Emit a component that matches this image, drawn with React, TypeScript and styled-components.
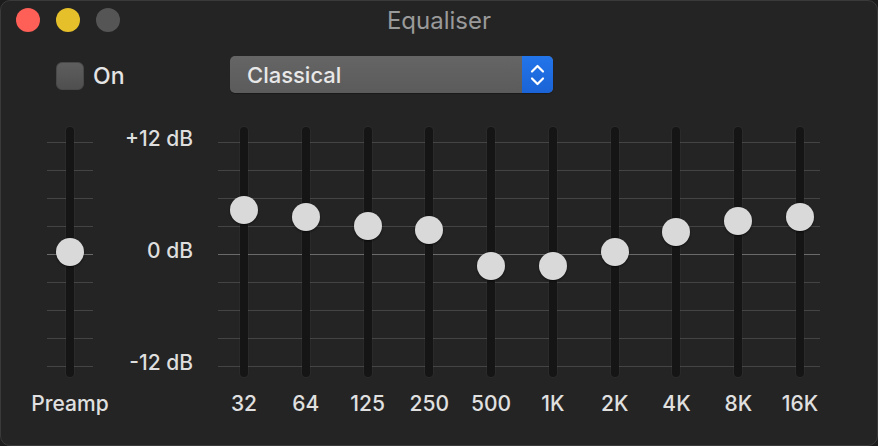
import React from 'react'
import styled, { createGlobalStyle, css } from 'styled-components'

const GlobalStyle = createGlobalStyle`
    html, body {
        margin: 0;
        padding: 0;
        background: #1c1c1c;
    }
    body {
        font-family: Inter, "Liberation Sans", "Noto Sans", sans-serif;
        -webkit-font-smoothing: antialiased;
    }
`

const PX_PER_DB = 9.333
const ZERO_Y = 127

const bands = [
    { label: '32', db: 4.7 },
    { label: '64', db: 4.0 },
    { label: '125', db: 3.0 },
    { label: '250', db: 2.6 },
    { label: '500', db: -1.3 },
    { label: '1K', db: -1.3 },
    { label: '2K', db: 0.2 },
    { label: '4K', db: 2.4 },
    { label: '8K', db: 3.5 },
    { label: '16K', db: 4.0 },
]

const gridLines = css`
    background-image: linear-gradient(#6a6a6a, #6a6a6a),
        repeating-linear-gradient(to bottom, #444444 0 1px, transparent 1px 28px);
    background-size: 100% 1px, 100% 225px;
    background-position: 0 127px, 0 15px;
    background-repeat: no-repeat;
`

const Window = styled.div`
    width: 878px;
    height: 446px;
    box-sizing: border-box;
    background: #242424;
    border: 1px solid #3a3a3a;
    border-radius: 10px;
    display: flex;
    flex-direction: column;
    overflow: hidden;
`

const TitleBar = styled.div`
    height: 38px;
    padding: 0 15px;
    display: grid;
    grid-template-columns: 1fr auto 1fr;
    align-items: center;
`

const Lights = styled.div`
    display: flex;
    gap: 16px;
`

const Light = styled.span<{ $color: string }>`
    width: 24px;
    height: 24px;
    border-radius: 50%;
    background: ${(p) => p.$color};
`

const Title = styled.div`
    font-size: 24px;
    color: #9a9a9a;
`

const ControlsRow = styled.div`
    margin-top: 17px;
    height: 37px;
    padding-left: 55px;
    display: flex;
    align-items: center;
`

const CheckGroup = styled.label`
    width: 174px;
    display: flex;
    align-items: center;
    gap: 9px;
    margin-top: 3px;
`

const CheckBox = styled.span`
    width: 28px;
    height: 28px;
    box-sizing: border-box;
    border-radius: 6px;
    background: linear-gradient(#5e5e5e, #4f4f4f);
    border: 1px solid #484848;
`

const CheckText = styled.span`
    font-size: 23px;
    font-weight: 500;
    color: #e4e4e4;
`

const Popup = styled.div`
    width: 323px;
    height: 37px;
    border-radius: 5px;
    overflow: hidden;
    display: flex;
    background: linear-gradient(#656565, #5b5b5b);
    box-shadow: 0 1px 1px rgba(0, 0, 0, 0.3);
`

const PopupText = styled.div`
    flex: 1;
    display: flex;
    align-items: center;
    padding-left: 17px;
    font-size: 22px;
    font-weight: 500;
    color: #e8e8e8;
`

const Stepper = styled.div`
    width: 31px;
    display: flex;
    align-items: center;
    justify-content: center;
    background: linear-gradient(#2375ea, #1a63d6);
`

const SliderArea = styled.div`
    margin-top: 34px;
    padding-left: 46px;
    display: flex;
`

const Column = styled.div<{ $width: number }>`
    width: ${(p) => p.$width}px;
    display: flex;
    flex-direction: column;
    align-items: center;
`

const PreampColumn = styled(Column)`
    ${gridLines}
`

const SliderBody = styled.div`
    position: relative;
    height: 250px;
    width: 100%;
    display: flex;
    justify-content: center;
`

const Track = styled.div`
    width: 8px;
    height: 100%;
    border-radius: 4px;
    background: #151515;
    box-shadow: 0 0 0 1px rgba(255, 255, 255, 0.03);
`

const Knob = styled.div`
    position: absolute;
    left: 50%;
    width: 28px;
    height: 28px;
    margin-left: -14px;
    border-radius: 50%;
    background: #d9d9d9;
    box-shadow: 0 1px 2px rgba(0, 0, 0, 0.55);
`

const BandLabel = styled.div`
    margin-top: 16px;
    line-height: 22px;
    font-size: 21px;
    font-weight: 500;
    color: #e0e0e0;
    white-space: nowrap;
`

const ScaleColumn = styled.div`
    width: 100px;
    height: 246px;
    margin-top: 1px;
    display: flex;
    flex-direction: column;
    justify-content: space-between;
    align-items: flex-end;
`

const ScaleLabel = styled.div`
    line-height: 22px;
    font-size: 21px;
    font-weight: 500;
    color: #dedede;
    white-space: nowrap;
`

const BandRow = styled.div`
    ${gridLines}
    margin-left: 25px;
    width: 602px;
    box-sizing: border-box;
    padding-left: 6px;
    display: flex;
    gap: 21.8px;
`

const Slider: React.FC<{ db: number }> = ({ db }) => (
    <SliderBody>
        <Track />
        <Knob style={{ top: ZERO_Y - db * PX_PER_DB - 14 }} />
    </SliderBody>
)

const Chevrons = () => (
    <svg width="15" height="26" viewBox="0 0 15 26" fill="none">
        <path
            d="M2 9.5 L7.5 4 L13 9.5"
            stroke="#fff"
            strokeWidth="2.2"
            strokeLinecap="round"
            strokeLinejoin="round"
        />
        <path
            d="M2 16.5 L7.5 22 L13 16.5"
            stroke="#fff"
            strokeWidth="2.2"
            strokeLinecap="round"
            strokeLinejoin="round"
        />
    </svg>
)

export default function App() {
    return (
        <>
            <GlobalStyle />
            <Window>
                <TitleBar>
                    <Lights>
                        <Light $color="#fe5f57" />
                        <Light $color="#e6c02a" />
                        <Light $color="#555555" />
                    </Lights>
                    <Title>Equaliser</Title>
                    <div />
                </TitleBar>

                <ControlsRow>
                    <CheckGroup>
                        <CheckBox />
                        <CheckText>On</CheckText>
                    </CheckGroup>
                    <Popup>
                        <PopupText>Classical</PopupText>
                        <Stepper>
                            <Chevrons />
                        </Stepper>
                    </Popup>
                </ControlsRow>

                <SliderArea>
                    <PreampColumn $width={46}>
                        <Slider db={0.2} />
                        <BandLabel>Preamp</BandLabel>
                    </PreampColumn>

                    <ScaleColumn>
                        <ScaleLabel>+12 dB</ScaleLabel>
                        <ScaleLabel>0 dB</ScaleLabel>
                        <ScaleLabel>-12 dB</ScaleLabel>
                    </ScaleColumn>

                    <BandRow>
                        {bands.map((b) => (
                            <Column key={b.label} $width={40}>
                                <Slider db={b.db} />
                                <BandLabel>{b.label}</BandLabel>
                            </Column>
                        ))}
                    </BandRow>
                </SliderArea>
            </Window>
        </>
    )
}
